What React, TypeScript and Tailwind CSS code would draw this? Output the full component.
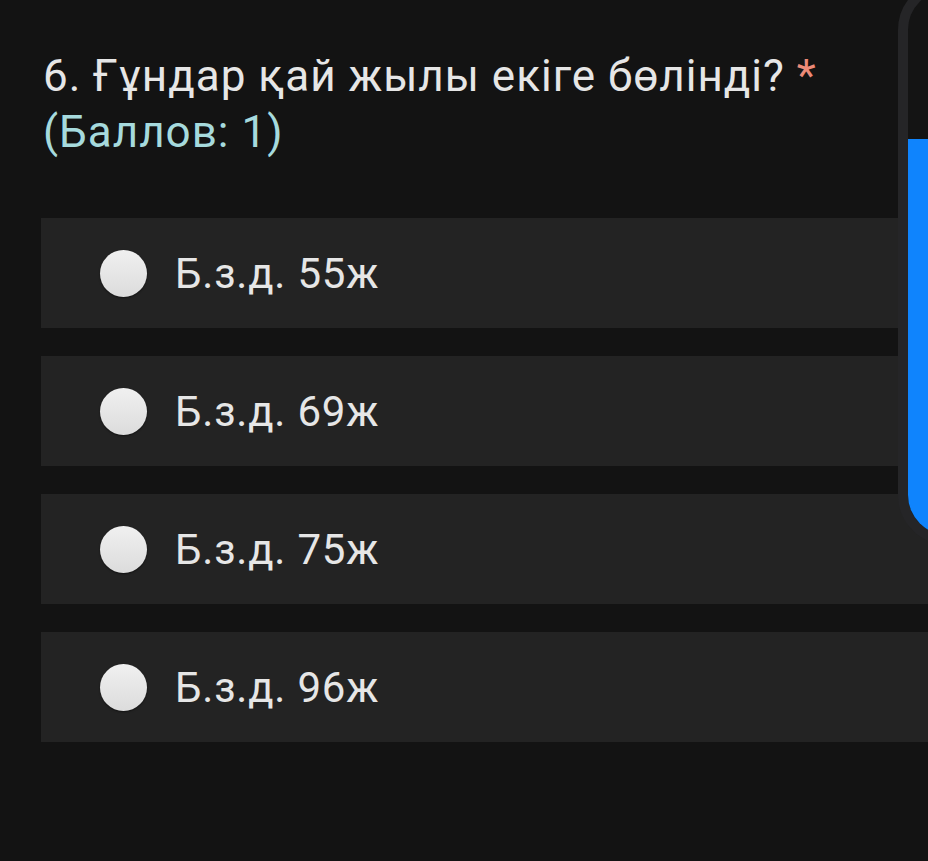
import React from "react";

const options = ["Б.з.д. 55ж", "Б.з.д. 69ж", "Б.з.д. 75ж", "Б.з.д. 96ж"];

export default function App() {
  return (
    <div
      className="relative w-[928px] h-[861px] overflow-hidden bg-[#131313]"
      style={{ fontFamily: "Roboto, 'Noto Sans', sans-serif" }}
    >
      <div className="pl-[43px] pt-[48px]">
        <div className="text-[44px] leading-[56px] tracking-[1px] text-[#e6e6e6]">
          6. Ғұндар қай жылы екіге бөлінді? <span className="text-[#ec8a78]">*</span>
        </div>
        <div className="text-[44px] leading-[56px] tracking-[1px] text-[#a6dadd]">(Баллов: 1)</div>
      </div>
      <div className="mt-[58px] ml-[41px] flex flex-col gap-[28px]">
        {options.map((o) => (
          <div key={o} className="h-[110px] bg-[#232323] flex items-center pl-[59px]">
            <div className="w-[47px] h-[47px] rounded-full bg-gradient-to-b from-[#f0f0f0] to-[#dcdcdc] shadow-[0_1px_2px_rgba(0,0,0,0.5)]" />
            <span className="ml-[28px] text-[42px] tracking-[0.8px] text-[#e6e6e6]">{o}</span>
          </div>
        ))}
      </div>
      <div className="absolute left-[898px] top-[-20px] w-[120px] h-[565px] rounded-[50px] border-[10px] border-[#252527] bg-[#141414] overflow-hidden">
        <div className="mt-[149px] h-[500px] bg-[#0f84fd]" />
      </div>
    </div>
  );
}
